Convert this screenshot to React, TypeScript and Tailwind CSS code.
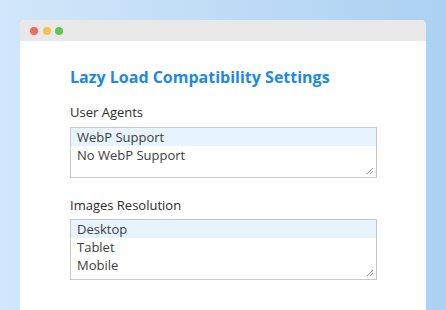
const font = { fontFamily: '"Open Sans", "Liberation Sans", sans-serif' };

function Grip() {
  return (
    <svg
      className="absolute right-[2px] bottom-[2px]"
      width="8"
      height="8"
      viewBox="0 0 8 8"
    >
      <path d="M7 1 L1 7 M7 4 L4 7" stroke="#9a9a9a" strokeWidth="1" />
    </svg>
  );
}

function ListBox({ items, height }: { items: string[]; height: string }) {
  return (
    <div
      className={`relative w-[307px] ${height} border border-[#c8c8c8] bg-white`}
    >
      {items.map((item, i) => (
        <div
          key={item}
          className={`h-[18px] pl-[6px] text-[13px] leading-[18px] text-[#3d3d3d] ${
            i === 0 ? "bg-[#e7f3fd]" : ""
          }`}
        >
          {item}
        </div>
      ))}
      <Grip />
    </div>
  );
}

export default function App() {
  return (
    <div
      className="w-[446px] h-[310px] overflow-hidden bg-gradient-to-r from-[#d2e7fa] to-[#acd1f2] px-[20px] pt-[20px]"
      style={font}
    >
      <div className="h-full rounded-t-[5px] bg-white overflow-hidden">
        <div className="flex h-[21px] items-center gap-[4.5px] bg-[#e8e8e8] pl-[10px]">
          <span className="h-2 w-2 rounded-full bg-[#ef6b5e]" />
          <span className="h-2 w-2 rounded-full bg-[#f6c14e]" />
          <span className="h-2 w-2 rounded-full bg-[#60c553]" />
        </div>
        <div className="flex flex-col pl-[50px] pt-[24px]">
          <h1 className="text-[16px] font-bold leading-[24px] text-[#1e88e5]">
            Lazy Load Compatibility Settings
          </h1>
          <div className="mt-[14px] text-[13px] leading-[18px] text-[#2b2b2b]">
            User Agents
          </div>
          <div className="mt-[6px]">
            <ListBox items={["WebP Support", "No WebP Support"]} height="h-[51px]" />
          </div>
          <div className="mt-[18px] text-[13px] leading-[18px] text-[#2b2b2b]">
            Images Resolution
          </div>
          <div className="mt-[5px]">
            <ListBox items={["Desktop", "Tablet", "Mobile"]} height="h-[61px]" />
          </div>
        </div>
      </div>
    </div>
  );
}
